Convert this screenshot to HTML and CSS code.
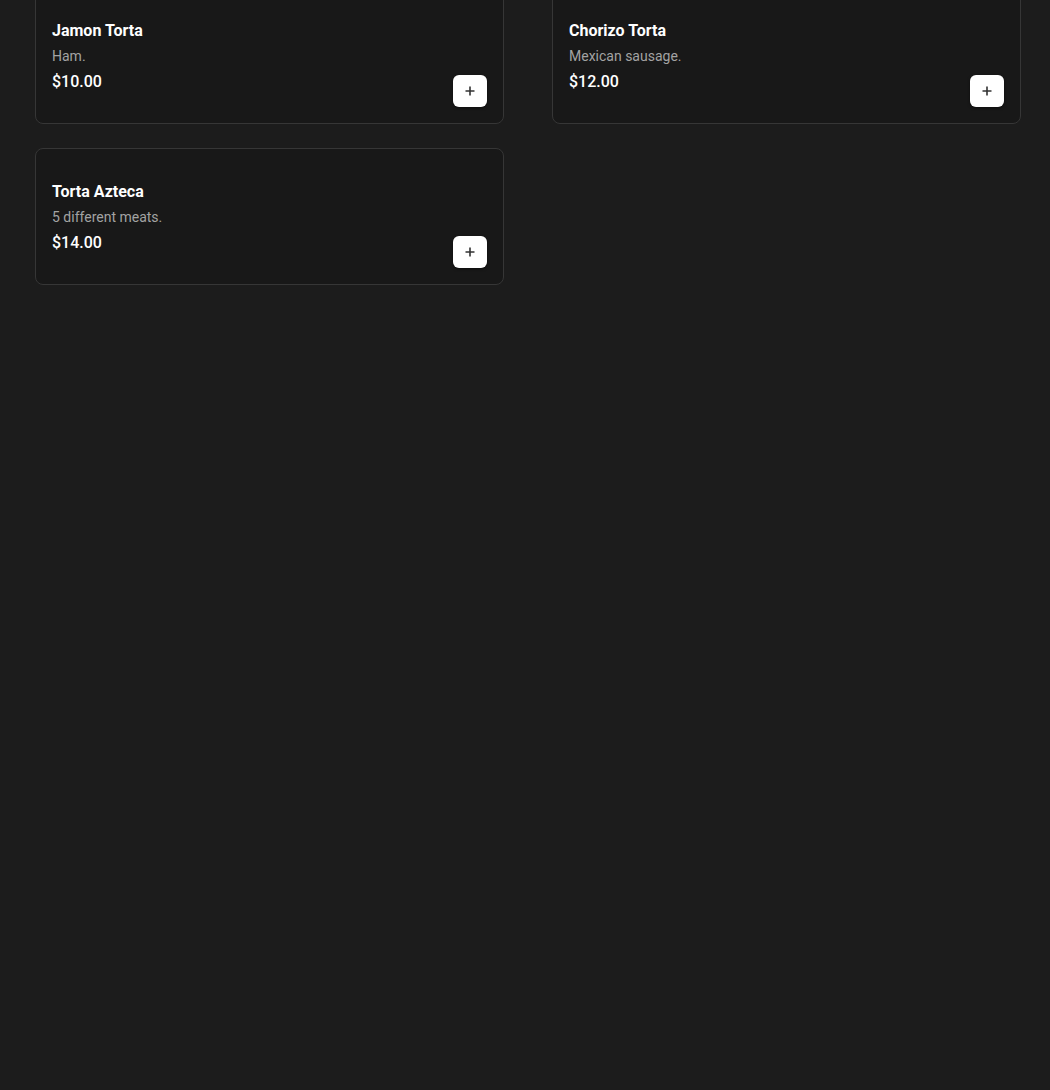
FILE: index.html
```html
<!DOCTYPE html>
<html lang="en">
<head>
<meta charset="utf-8">
<title>Tortas</title>
<link rel="stylesheet" href="styles.css">
</head>
<body>
<main class="menu-grid">
  <article class="item-card">
    <div class="item-info">
      <h3 class="item-name">Jamon Torta</h3>
      <p class="item-desc">Ham.</p>
      <p class="item-price">$10.00</p>
    </div>
    <button class="add-btn" aria-label="Add Jamon Torta">
      <svg viewBox="0 0 10 10" width="10" height="10"><path d="M5 0.5V9.5M0.5 5H9.5" stroke="#333" stroke-width="1.6" fill="none"/></svg>
    </button>
  </article>
  <article class="item-card">
    <div class="item-info">
      <h3 class="item-name">Chorizo Torta</h3>
      <p class="item-desc">Mexican sausage.</p>
      <p class="item-price">$12.00</p>
    </div>
    <button class="add-btn" aria-label="Add Chorizo Torta">
      <svg viewBox="0 0 10 10" width="10" height="10"><path d="M5 0.5V9.5M0.5 5H9.5" stroke="#333" stroke-width="1.6" fill="none"/></svg>
    </button>
  </article>
  <article class="item-card">
    <div class="item-info">
      <h3 class="item-name">Torta Azteca</h3>
      <p class="item-desc">5 different meats.</p>
      <p class="item-price">$14.00</p>
    </div>
    <button class="add-btn" aria-label="Add Torta Azteca">
      <svg viewBox="0 0 10 10" width="10" height="10"><path d="M5 0.5V9.5M0.5 5H9.5" stroke="#333" stroke-width="1.6" fill="none"/></svg>
    </button>
  </article>
</main>
</body>
</html>
```
FILE: styles.css
```css
html, body {
  margin: 0;
  padding: 0;
  background: #1c1c1c;
  height: 100%;
}
body {
  font-family: Roboto, "Liberation Sans", sans-serif;
  color: #fff;
  overflow: hidden;
}
.menu-grid {
  display: grid;
  grid-template-columns: 1fr 1fr;
  column-gap: 48px;
  row-gap: 24px;
  padding: 0 29px 0 35px;
  margin-top: -13px;
  align-items: start;
}
.item-card {
  display: flex;
  align-items: flex-end;
  justify-content: space-between;
  border: 1px solid #363636;
  border-radius: 8px;
  background: #181818;
  padding: 31px 16px 16px 16px;
  height: 137px;
  box-sizing: border-box;
}
.item-info {
  align-self: flex-start;
}
.item-name {
  margin: 0;
  font-size: 16px;
  line-height: 24px;
  font-weight: 700;
}
.item-desc {
  margin: 3px 0 0;
  font-size: 14px;
  line-height: 20px;
  color: #a3a3a3;
}
.item-price {
  margin: 4px 0 0;
  font-size: 16px;
  line-height: 24px;
  font-weight: 500;
}
.add-btn {
  width: 34px;
  height: 32px;
  border: none;
  border-radius: 6px;
  background: #fff;
  display: flex;
  align-items: center;
  justify-content: center;
  padding: 0;
  cursor: pointer;
  box-shadow: 0 1px 3px rgba(0,0,0,0.5);
}
.add-btn svg {
  display: block;
}
```
